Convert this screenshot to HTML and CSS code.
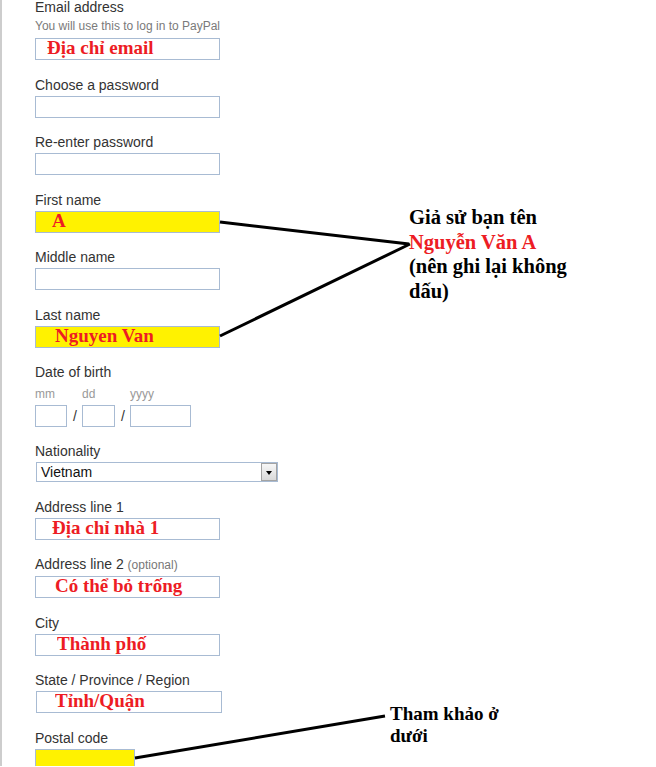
FILE: index.html
```html
<!DOCTYPE html>
<html>
<head>
  <title>Sign up</title>
  <link rel="stylesheet" href="styles.css">
</head>
<body>
  <div class="page">
    <form class="signup">
      <div class="field">
        <label>Email address</label>
        <span class="hint">You will use this to log in to PayPal</span>
        <input class="text pad-s" value="Địa chỉ email" />
      </div>

      <div class="field">
        <label>Choose a password</label>
        <input class="text" type="password" />
      </div>

      <div class="field">
        <label>Re-enter password</label>
        <input class="text" type="password" />
      </div>

      <div class="field">
        <label>First name</label>
        <input class="text filled pad-m" value="A" />
      </div>

      <div class="field">
        <label>Middle name</label>
        <input class="text" />
      </div>

      <div class="field">
        <label>Last name</label>
        <input class="text filled pad-l" value="Nguyen Van" />
      </div>

      <div class="field">
        <label>Date of birth</label>
        <div class="dob">
          <span class="sub">mm</span>
          <span></span>
          <span class="sub">dd</span>
          <span></span>
          <span class="sub">yyyy</span>
          <input class="text" />
          <span class="slash">/</span>
          <input class="text" />
          <span class="slash">/</span>
          <input class="text" />
        </div>
      </div>

      <div class="field">
        <label>Nationality</label>
        <div class="select">
          <span class="select-value">Vietnam</span>
          <span class="select-btn"></span>
        </div>
      </div>

      <div class="field">
        <label>Address line 1</label>
        <input class="text pad-m" value="Địa chỉ nhà 1" />
      </div>

      <div class="field">
        <label>Address line 2 <span class="optional">(optional)</span></label>
        <input class="text pad-l" value="Có thể bỏ trống" />
      </div>

      <div class="field">
        <label>City</label>
        <input class="text pad-xl" value="Thành phố" />
      </div>

      <div class="field">
        <label>State / Province / Region</label>
        <input class="text state pad-l" value="Tỉnh/Quận" />
      </div>

      <div class="field">
        <label>Postal code</label>
        <input class="text filled postal" />
      </div>
    </form>

    <!-- notes drawn over the form -->
    <div class="note note-name">Giả sử bạn tên<br><span class="red">Nguyễn Văn A</span><br>(nên ghi lại không<br>dấu)</div>
    <div class="note note-postal">Tham khảo ở<br>dưới</div>

    <svg class="arrows" width="656" height="767" viewBox="0 0 656 767">
      <line x1="220" y1="223" x2="409" y2="245" />
      <line x1="220" y1="337" x2="410" y2="245" />
      <line x1="135" y1="759" x2="385" y2="717" />
    </svg>
  </div>
</body>
</html>
```

FILE: styles.css
```css
html, body {
  margin: 0;
  padding: 0;
  overflow: hidden;
  background: #fff;
}

body {
  font-family: "Liberation Sans", Arial, sans-serif;
  color: #333;
}

.page {
  position: relative;
  height: 767px;
  border-left: 2px solid #cdcdcd;
  padding-left: 33px;
}

.signup {
  margin-top: -1px;
}

.field {
  margin-bottom: 16.5px;
}

.field label {
  display: block;
  font-size: 14px;
  line-height: 17px;
  margin-bottom: 2px;
}

.hint {
  display: block;
  font-size: 12px;
  line-height: 15px;
  color: #7a7a7a;
  margin: 3px 0 4px;
}

.optional {
  font-size: 12px;
  color: #777;
}

.text {
  display: block;
  box-sizing: border-box;
  width: 185px;
  height: 22px;
  margin: 0;
  padding: 0 0 2px 4px;
  border: 1px solid #a8bbd3;
  border-radius: 0;
  background: #fff;
  font-family: "Liberation Serif", "Times New Roman", serif;
  font-weight: bold;
  font-size: 19px;
  color: #ed1c24;
  outline: none;
}

.filled {
  background: #fff200;
}

.pad-s { padding-left: 11px; }
.pad-m { padding-left: 16px; }
.pad-l { padding-left: 19px; }
.pad-xl { padding-left: 21px; }

.state {
  width: 186px;
  margin-left: 1px;
  padding-left: 18px;
}

.postal {
  width: 100px;
}

.dob {
  display: grid;
  grid-template-columns: 32px 15px 33px 15px 61px;
  align-items: center;
}

.dob .sub {
  font-size: 12px;
  line-height: 14px;
  color: #999;
  margin: 4px 0 3.6px;
}

.dob .text {
  width: 100%;
}

.slash {
  font-size: 14px;
  text-align: center;
  padding-left: 1px;
}

.select {
  display: flex;
  align-items: center;
  box-sizing: border-box;
  width: 242px;
  height: 20px;
  margin-left: 1px;
  border: 1px solid #a8bbd3;
}

.select-value {
  flex: 1;
  padding-left: 4px;
  font-size: 14px;
  color: #111;
}

.select-btn {
  position: relative;
  box-sizing: border-box;
  width: 16px;
  height: 18px;
  border: 1px solid #a3a3a3;
  background: linear-gradient(#f7f7f7, #d9d9d9);
}

.select-btn::after {
  content: "";
  position: absolute;
  left: 4px;
  top: 7px;
  border-left: 3.5px solid transparent;
  border-right: 3.5px solid transparent;
  border-top: 4px solid #000;
}

.note {
  position: absolute;
  font-family: "Liberation Serif", "Times New Roman", serif;
  font-weight: bold;
  color: #000;
}

.note-name {
  left: 407px;
  top: 206px;
  font-size: 20.5px;
  line-height: 24.7px;
}

.note-postal {
  left: 388px;
  top: 704px;
  font-size: 19px;
  line-height: 22px;
}

.red {
  color: #ed1c24;
}

.arrows {
  position: absolute;
  left: -2px;
  top: 0;
  pointer-events: none;
}

.arrows line {
  stroke: #000;
  stroke-width: 3;
}
```
